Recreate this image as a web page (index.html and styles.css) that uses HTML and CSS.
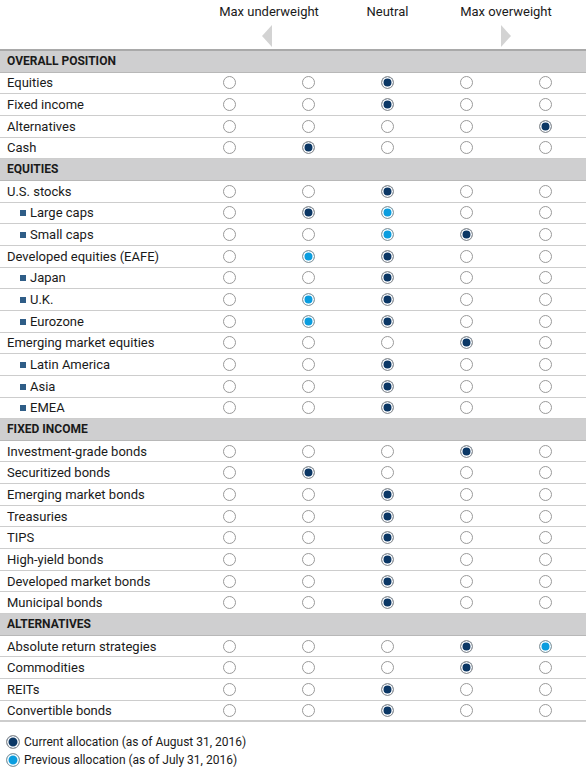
FILE: index.html
```html
<!DOCTYPE html>
<html lang="en">
<head>
  <meta charset="UTF-8">
  <meta name="viewport" content="width=device-width, initial-scale=1.0">
  <title>Asset allocation views</title>
  <link rel="stylesheet" href="styles.css">
</head>
<body>
  <div id="matrix">
    <div class="scale-head">
      <div class="scale-label under">Max underweight</div>
      <div class="scale-label neutral">Neutral</div>
      <div class="scale-label over">Max overweight</div>
      <span class="arrow arrow-left"></span>
      <span class="arrow arrow-right"></span>
    </div>
    <div id="rows"></div>
    <div class="legend">
      <div class="legend-item"><span class="dot current"></span>Current allocation (as of August 31, 2016)</div>
      <div class="legend-item"><span class="dot previous"></span>Previous allocation (as of July 31, 2016)</div>
    </div>
  </div>

  <script>
    // [label, current, previous, sub-item]
    const sections = [
      ['OVERALL POSITION', [
        ['Equities', 3], ['Fixed income', 3], ['Alternatives', 5], ['Cash', 2]
      ]],
      ['EQUITIES', [
        ['U.S. stocks', 3],
        ['Large caps', 2, 3, true],
        ['Small caps', 4, 3, true],
        ['Developed equities (EAFE)', 3, 2],
        ['Japan', 3, 0, true],
        ['U.K.', 3, 2, true],
        ['Eurozone', 3, 2, true],
        ['Emerging market equities', 4],
        ['Latin America', 3, 0, true],
        ['Asia', 3, 0, true],
        ['EMEA', 3, 0, true]
      ]],
      ['FIXED INCOME', [
        ['Investment-grade bonds', 4], ['Securitized bonds', 2], ['Emerging market bonds', 3],
        ['Treasuries', 3], ['TIPS', 3], ['High-yield bonds', 3],
        ['Developed market bonds', 3], ['Municipal bonds', 3]
      ]],
      ['ALTERNATIVES', [
        ['Absolute return strategies', 4, 5], ['Commodities', 4], ['REITs', 3], ['Convertible bonds', 3]
      ]]
    ];

    const rows = document.getElementById('rows');

    sections.forEach(([title, items]) => {
      const head = document.createElement('div');
      head.className = 'section';
      head.textContent = title;
      rows.appendChild(head);

      items.forEach(([label, current, previous, sub]) => {
        const row = document.createElement('div');
        row.className = 'row';
        let cells = `<div class="label${sub ? ' sub' : ''}">${label}</div>`;
        for (let i = 1; i <= 5; i++) {
          let cls = 'dot';
          if (i === current) cls += ' current';
          else if (i === previous) cls += ' previous';
          cells += `<div class="cell"><span class="${cls}"></span></div>`;
        }
        row.innerHTML = cells;
        rows.appendChild(row);
      });
    });
  </script>
</body>
</html>
```

FILE: styles.css
```css
body {
  margin: 0;
  background: #fff;
  color: #1a1a1a;
  font-family: Roboto, 'Liberation Sans', Arial, sans-serif;
  font-size: 13px;
}

#matrix {
  width: 586px;
}

/* Scale header */
.scale-head {
  position: relative;
  height: 49px;
  display: grid;
  grid-template-columns: 190px repeat(5, 79px);
  border-bottom: 2px solid #a9a9a9;
}
.scale-label {
  padding-top: 4px;
  text-align: center;
  font-size: 13px;
}
.under { grid-column: 2 / 4; }
.neutral { grid-column: 4 / 5; }
.over { grid-column: 5 / 7; }

.arrow {
  position: absolute;
  top: 25px;
  width: 0;
  height: 0;
  border-top: 11px solid transparent;
  border-bottom: 11px solid transparent;
}
.arrow-left {
  left: 262px;
  border-right: 10px solid #d3d3d3;
}
.arrow-right {
  left: 501px;
  border-left: 10px solid #d3d3d3;
}

/* Rows */
.section {
  height: 21.66px;
  box-sizing: border-box;
  line-height: 20px;
  padding-left: 7px;
  background: #cfcfd0;
  border-bottom: 1px solid #b8b8b8;
  font-weight: bold;
  font-size: 12px;
}
.row {
  display: grid;
  grid-template-columns: 190px repeat(5, 79px);
  height: 21.66px;
  box-sizing: border-box;
  border-bottom: 1px solid #cdcdcd;
  align-items: center;
}
.label {
  padding-left: 7px;
  white-space: nowrap;
}
.label.sub {
  padding-left: 20px;
}
.label.sub::before {
  content: '';
  display: inline-block;
  width: 6px;
  height: 6px;
  background: #2f5d87;
  margin-right: 4px;
  vertical-align: 1px;
}
.row:last-child {
  border-bottom: 2px solid #cdcdcd;
}
.cell {
  display: flex;
  justify-content: center;
}

/* Dots */
.dot {
  display: inline-block;
  width: 13px;
  height: 13px;
  box-sizing: border-box;
  border-radius: 50%;
  border: 1px solid #9a9a9a;
  background: #fff;
}
.dot.current {
  background: #0b3765;
  box-shadow: inset 0 0 0 1.5px #fff;
}
.dot.previous {
  background: #0a9ddf;
  box-shadow: inset 0 0 0 1.5px #fff;
}

/* Legend */
.legend {
  padding: 11px 0 0 6px;
  font-size: 12px;
}
.legend-item {
  display: flex;
  align-items: center;
  height: 18px;
}
.legend-item .dot {
  width: 14px;
  height: 14px;
  margin-right: 4px;
}
```
